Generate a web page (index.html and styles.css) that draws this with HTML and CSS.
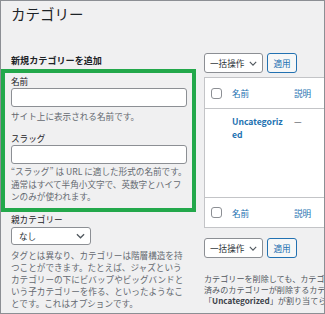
FILE: index.html
```html
<!DOCTYPE html>
<html lang="ja">
<head>
<meta charset="utf-8">
<title>カテゴリー</title>
<link rel="stylesheet" href="styles.css">
</head>
<body>
<div class="frame">
  <h1 class="title">カテゴリー</h1>
  <div class="columns">
    <div class="left">
      <h2 class="add-heading">新規カテゴリーを追加</h2>
      <div class="highlight">
        <div class="field">
          <label class="label">名前</label>
          <div class="input"></div>
          <p class="desc desc-name">サイト上に表示される名前です。</p>
        </div>
        <div class="field field-slug">
          <label class="label">スラッグ</label>
          <div class="input"></div>
          <p class="desc desc-slug">“スラッグ” は URL に適した形式の名前です。<br>通常はすべて半角小文字で、英数字とハイフ<br>ンのみが使われます。</p>
        </div>
      </div>
      <div class="parent">
        <label class="label">親カテゴリー</label>
        <div class="select select-parent">
          <span>なし</span>
          <svg class="chev" viewBox="0 0 10 6" width="9" height="6"><polyline points="1,1 5,5 9,1" fill="none" stroke="#50575e" stroke-width="1.4"/></svg>
        </div>
        <p class="desc desc-parent">タグとは異なり、カテゴリーは階層構造を持<br>つことができます。たとえば、ジャズという<br>カテゴリーの下にビバップやビッグバンドと<br>いう子カテゴリーを作る、といったようなこ<br>とです。これはオプションです。</p>
      </div>
    </div>
    <div class="right">
      <div class="bulk">
        <div class="select select-bulk">
          <span>一括操作</span>
          <svg class="chev" viewBox="0 0 10 6" width="8" height="5"><polyline points="1,1 5,5 9,1" fill="none" stroke="#50575e" stroke-width="1.4"/></svg>
        </div>
        <div class="apply">適用</div>
      </div>
      <div class="table">
        <div class="row row-head">
          <div class="cell cell-cb"><span class="checkbox"></span></div>
          <div class="cell cell-name"><span class="link">名前</span></div>
          <div class="cell cell-desc"><span class="link">説明</span></div>
        </div>
        <div class="row row-body">
          <div class="cell cell-cb"></div>
          <div class="cell cell-name"><span class="term">Uncategorized</span></div>
          <div class="cell cell-desc"><span class="dash">—</span></div>
        </div>
        <div class="row row-foot">
          <div class="cell cell-cb"><span class="checkbox"></span></div>
          <div class="cell cell-name"><span class="link">名前</span></div>
          <div class="cell cell-desc"><span class="link">説明</span></div>
        </div>
      </div>
      <div class="bulk bulk-bottom">
        <div class="select select-bulk">
          <span>一括操作</span>
          <svg class="chev" viewBox="0 0 10 6" width="8" height="5"><polyline points="1,1 5,5 9,1" fill="none" stroke="#50575e" stroke-width="1.4"/></svg>
        </div>
        <div class="apply">適用</div>
      </div>
      <p class="note">カテゴリーを削除しても、カテゴリー内の投稿は削除されません。その代わり、削除<br>済みのカテゴリーが削除するカテゴリーにのみ割り当てられていた投稿には、<br>「<b>Uncategorized</b>」が割り当てられます。</p>
    </div>
  </div>
</div>
</body>
</html>
```

FILE: styles.css
```css
* { box-sizing: border-box; }
html, body { margin: 0; padding: 0; background: #f0f0f1; }
body {
  font-family: "Noto Sans CJK JP", "Noto Sans", sans-serif;
  font-size: 8.6px;
  color: #3c434a;
}
.frame {
  width: 325px;
  height: 314px;
  border: 1px solid #8c8f94;
  background: #f0f0f1;
  overflow: hidden;
  padding-top: 4px;
}
.title {
  margin: 0;
  padding-left: 10px;
  font-size: 14.5px;
  line-height: 18px;
  font-weight: 400;
  color: #1d2327;
}
.columns {
  display: flex;
  margin-top: 30px;
  gap: 8px;
}
.left {
  width: 195px;
  flex: none;
}
.add-heading {
  margin: 1px 0 3px 10px;
  font-size: 9.1px;
  line-height: 12px;
  font-weight: 700;
  color: #1d2327;
}
.highlight {
  border: 4px solid #23a84b;
  padding: 2px 5px 5px 6px;
}
.label {
  display: block;
  line-height: 12px;
  color: #1d2327;
}
.input {
  margin-top: 1px;
  height: 19px;
  background: #fff;
  border: 1px solid #8c8f94;
  border-radius: 3px;
}
.desc {
  margin: 0;
  color: #646970;
  white-space: nowrap;
}
.desc-name { margin-top: 3px; line-height: 13px; }
.field-slug { margin-top: 9px; }
.desc-slug { margin-top: 1px; line-height: 12.7px; }
.parent { padding-left: 10px; margin-top: 1px; }
.select {
  display: flex;
  align-items: center;
  justify-content: space-between;
  background: #fff;
  border: 1px solid #8c8f94;
  border-radius: 3px;
  color: #2c3338;
}
.select-parent {
  margin-top: 2px;
  width: 80px;
  height: 18px;
  padding: 0 5px 0 7px;
}
.desc-parent { margin-top: 4px; line-height: 12.1px; }
.right {
  flex: none;
  width: 200px;
}
.bulk {
  display: flex;
  gap: 4px;
}
.select-bulk {
  width: 59px;
  height: 20px;
  padding: 0 5px 0 5px;
}
.apply {
  width: 30px;
  height: 20px;
  border: 1px solid #2271b1;
  border-radius: 3px;
  background: #f6f7f7;
  color: #2271b1;
  display: flex;
  align-items: center;
  justify-content: center;
}
.table {
  margin-top: 4px;
  background: #fff;
  border: 1px solid #c3c4c7;
}
.row {
  display: grid;
  grid-template-columns: 27px 62px 1fr;
}
.row-head { height: 31px; border-bottom: 1px solid #c3c4c7; align-items: center; }
.row-body { height: 89px; border-bottom: 1px solid #c3c4c7; align-items: start; padding-top: 6px; }
.row-foot { height: 29px; align-items: center; }
.cell-cb { padding-left: 6px; display: flex; align-items: center; }
.checkbox {
  display: block;
  width: 11px;
  height: 11px;
  border: 1px solid #8c8f94;
  border-radius: 3px;
  background: #fff;
}
.link { color: #2271b1; }
.term {
  display: block;
  width: 54px;
  color: #2271b1;
  font-weight: 700;
  word-break: break-all;
  line-height: 12.5px;
}
.cell-desc { padding-left: 0; }
.dash { color: #3c434a; line-height: 12.5px; display: block; }
.bulk-bottom { margin-top: 10px; }
.note {
  margin: 15px 0 0;
  font-size: 8.1px;
  line-height: 11px;
  color: #50575e;
  white-space: nowrap;
}
.note b { color: #3c434a; }
```
